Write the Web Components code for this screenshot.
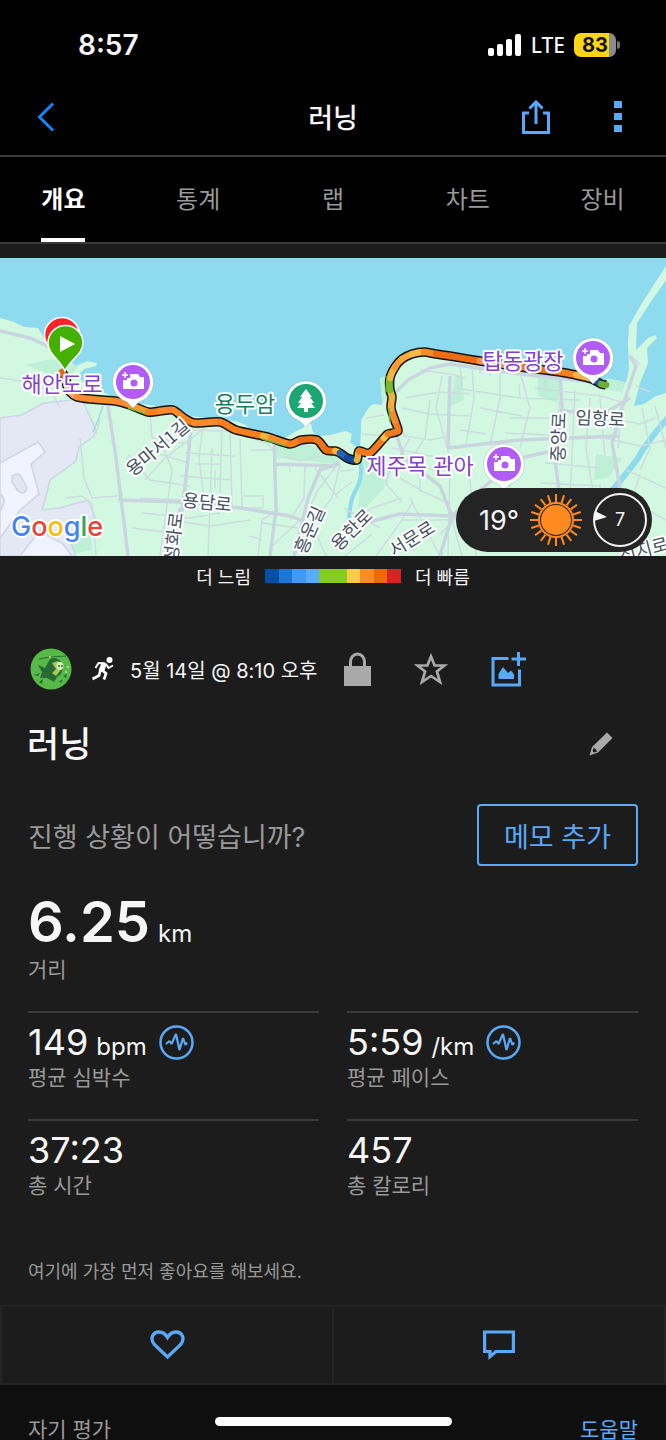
<!DOCTYPE html>
<html lang="ko">
<head>
<meta charset="utf-8">
<meta name="viewport" content="width=device-width, initial-scale=1">
<title>러닝</title>
<style>
    body {
        margin: 0;
        background: #1c1c1c;
        color: #f5f5f5;
        font-family: Inter, "Noto Sans CJK KR", sans-serif;
    }
</style>
</head>
<body>
<activity-page>
    <status-bar slot="top" time="8:57" network="LTE" battery="83"></status-bar>
    <nav-header slot="top">러닝</nav-header>
    <tab-bar slot="top" tabs="개요,통계,랩,차트,장비"></tab-bar>

    <route-map>
        <weather-pill temperature="19°" wind="7"></weather-pill>
    </route-map>
    <pace-legend slow="더 느림" fast="더 빠름"></pace-legend>
    <activity-meta>5월 14일 @ 8:10 오후</activity-meta>
    <activity-title>러닝</activity-title>
    <memo-row action="메모 추가">진행 상황이 어떻습니까?</memo-row>

    <metric-grid>
        <metric-tile main value="6.25" unit="km">거리</metric-tile>
        <metric-tile value="149" unit="bpm" chart>평균 심박수</metric-tile>
        <metric-tile value="5:59" unit="/km" chart>평균 페이스</metric-tile>
        <metric-tile value="37:23">총 시간</metric-tile>
        <metric-tile value="457">총 칼로리</metric-tile>
    </metric-grid>

    <social-bar>여기에 가장 먼저 좋아요를 해보세요.</social-bar>
    <self-evaluation help="도움말">자기 평가</self-evaluation>
</activity-page>

<script>
const icons = {
    back: `<svg width="18" height="30" viewBox="0 0 18 30" fill="none" stroke="#1085f5" stroke-width="3"><path d="M16 1.500L2.500 15L16 28.500"/></svg>`,
    share: `<svg width="28" height="34" viewBox="0 0 28 34" fill="none" stroke="#5aa9f8" stroke-width="3"><path d="M7 13H1.500V32.500H26.500V13H21M14 24V2"/><path d="M7.500 8.500L14 2L20.500 8.500"/></svg>`,
    more: `<svg width="22" height="32" viewBox="-7 0 22 32" fill="#5aa9f8"><path d="M0 0h8v7H0zM0 12h8v7H0zM0 24h8v7H0z"/></svg>`,
    lock: `<svg width="27" height="34" viewBox="0 0 27 34"><path d="M0 14h27v20H0z" fill="#a9a9a9"/><path d="M6.500 15V9.500a7 7.500 0 0 1 14 0V15" fill="none" stroke="#a9a9a9" stroke-width="3"/></svg>`,
    star: `<svg width="34" height="32" viewBox="0 0 34 32" fill="none" stroke="#a9a9a9" stroke-width="2.700"><path d="M17 3.500L20.600 12.500H30.500L22.900 18.500L26 29L17 23L8 29L11.100 18.500L3.500 12.500H13.400Z"/></svg>`,
    photo: `<svg width="35" height="35" viewBox="0 0 35 35"><path d="M17.500 6.500H2V33H28.500V17.500M27.500 0V14M20.500 7H35" fill="none" stroke="#5aa9f8" stroke-width="3"/><path d="M7.500 27V22L12 15L17 21L20 18.500L23 22.500V27Z" fill="#5aa9f8"/></svg>`,
    pencil: `<svg width="24" height="24" viewBox="0 0 24 24"><path d="M18 0.500L23.500 6L9 20.500L0.500 23.500L3 15Z" fill="#a9a9a9"/><path d="M4.800 15.500L8.500 19.300L5 20.500L3.500 19Z" fill="#1c1c1c"/></svg>`,
    runner: `<svg width="22" height="24" viewBox="0 0 22 24"><circle cx="17.500" cy="3" r="3" fill="#fff"/><path d="M13.500 6.500L6.500 6L3.500 11M14 7L16.500 11L21 8.500" fill="none" stroke="#fff" stroke-width="2"/><path d="M12.500 6L9 14.500" stroke="#fff" stroke-width="5.500"/><path d="M10 13L14 16.500L12 22.500M8.500 13L7 18.500L0.500 22" fill="none" stroke="#fff" stroke-width="2.700"/></svg>`,
    wave: `<svg width="35" height="35" viewBox="0 0 35 35" fill="none" stroke="#5aa9f8"><circle cx="17.500" cy="17.500" r="16" stroke-width="2.500"/><path d="M7 19L10.500 16L12.500 19L17 9L20.500 25L24 13L26.500 20L28 17.500" stroke-width="2.200" stroke-linejoin="bevel"/></svg>`,
    heart: `<svg width="35" height="30" viewBox="0 0 35 30" fill="none" stroke="#5aa9f8" stroke-width="3.300"><path d="M17.500 27L4.300 14.500C-0.500 8.500 3 2 9 2C13 2 15.500 4 17.500 7.500C19.500 4 22 2 26 2C32 2 35.500 8.500 30.700 14.500Z"/></svg>`,
    comment: `<svg width="32" height="30" viewBox="0 0 32 30" fill="none" stroke="#5aa9f8" stroke-width="3.200"><path d="M1.600 2H30.400V21.500H13L7 26.500V21.500H1.600Z"/></svg>`
};

// Base class: puts the element's template in an open shadow root
class BaseElement extends HTMLElement {
    connectedCallback () {
        if (this.shadowRoot) return;
        const template = document.createElement ("template");
        template.innerHTML = `
        <style>
            :host { display: block; }
            * { box-sizing: border-box; }
            svg { display: block; flex: none; }
            button {
                margin: 0;
                padding: 0;
                border: 0;
                background: none;
                color: inherit;
                font: inherit;
                cursor: pointer;
            }
        </style>` + this.render ();
        this.attachShadow ({mode: "open"}).appendChild (template.content.cloneNode (true));
    }
}

class ActivityPage extends BaseElement {
    render () {
        return `
        <style>
            header { background: #000; }
            main { padding-top: 14px; }
            .home {
                position: fixed;
                left: 50%;
                bottom: 14px;
                width: 237px;
                height: 9px;
                margin-left: -118px;
                border-radius: 5px;
                background: #fff;
            }
        </style>
        <header><slot name="top"></slot></header>
        <main><slot></slot></main>
        <div class="home"></div>`;
    }
}

class StatusBar extends BaseElement {
    render () {
        return `
        <style>
            :host {
                display: flex;
                align-items: center;
                justify-content: space-between;
                height: 80px;
                padding: 10px 46px 0 78px;
                box-sizing: border-box;
            }
            .time { font-size: 28px; font-weight: 600; }
            .right { display: flex; align-items: center; gap: 9px; }
            .network { font: 500 21px "Noto Sans", sans-serif; }
            .battery { display: flex; align-items: center; gap: 1px; }
            .level {
                width: 42px;
                height: 24px;
                border-radius: 7px;
                background: linear-gradient(90deg, #fcd517 83%, #8b8b8b 83%);
                color: #111;
                font-size: 20px;
                font-weight: 700;
                line-height: 24px;
                text-align: center;
            }
            .tip { width: 3px; height: 8px; border-radius: 0 3px 3px 0; background: #777; }
        </style>
        <span class="time">${this.getAttribute ("time")}</span>
        <div class="right">
            <svg width="34" height="22" viewBox="0 0 34 22" fill="#fff">
                <rect x="0" y="14" width="6" height="8" rx="2"/>
                <rect x="9" y="10" width="6" height="12" rx="2"/>
                <rect x="18" y="5" width="6" height="17" rx="2"/>
                <rect x="27" y="0" width="6" height="22" rx="2"/>
            </svg>
            <span class="network">${this.getAttribute ("network")}</span>
            <div class="battery"><div class="level">${this.getAttribute ("battery")}</div><div class="tip"></div></div>
        </div>`;
    }
}

class NavHeader extends BaseElement {
    render () {
        return `
        <style>
            :host {
                display: grid;
                grid-template-columns: 1fr auto 1fr;
                align-items: center;
                height: 77px;
                padding: 0 37px 2px;
                border-bottom: 2px solid #3a3a3a;
                box-sizing: border-box;
            }
            h1 { margin: 0; font-size: 27px; font-weight: 500; }
            .actions { display: flex; align-items: center; justify-content: flex-end; gap: 57px; }
        </style>
        <button aria-label="뒤로">${icons.back}</button>
        <h1><slot></slot></h1>
        <div class="actions">
            <button aria-label="공유">${icons.share}</button>
            <button aria-label="더 보기">${icons.more}</button>
        </div>`;
    }
}

class TabBar extends BaseElement {
    render () {
        const tabs = this.getAttribute ("tabs").split (",");
        return `
        <style>
            :host { border-bottom: 2px solid #3a3a3a; overflow: hidden; }
            nav { display: grid; grid-template-columns: repeat(5, 1fr); margin: 0 -4px; }
            button {
                justify-self: center;
                height: 85px;
                border-bottom: 4px solid transparent;
                color: #999;
                font-size: 24px;
            }
            button[aria-current] { border-color: #fff; color: #fff; font-weight: 600; }
        </style>
        <nav>${tabs.map ((tab, i) => `<button ${i === 0 ? `aria-current="page"` : ""}>${tab}</button>`).join ("")}</nav>`;
    }
}

const camera = `<path d="M-10 -2h4v-2h3v-4h8l2 3h4v12h-21z" fill="#fff"/><circle cx="1" cy="1" r="3.500" fill="#b15cf7"/><path d="M-8 -10v6M-11 -7h6" stroke="#b15cf7" stroke-width="4"/><path d="M-8 -10v6M-11 -7h6" stroke="#fff" stroke-width="1.500"/>`;
const tree = `<path d="M0 -12L6 -4H4L8 2H5L9 7H2V11H-2V7H-9L-5 2H-8L-4 -4H-6Z" fill="#fff"/>`;

const pin = (x, y, color, glyph) => `
    <g transform="translate(${x} ${y})">
        <path d="M0 26L-6 20A20.500 20.500 0 1 1 6 20Z" fill="#fff" stroke="#8aa" stroke-opacity=".4"/>
        <circle r="17" fill="${color}"/>${glyph}
    </g>`;

const label = (x, y, turn, text, kind = "road") =>
    `<text class="${kind}" transform="translate(${x} ${y}) rotate(${turn})" y="${kind === "road" ? 6 : 8}">${text}</text>`;

// Minor streets, then the wider ones
const streets = `
    M0 120L30 124L52 135L60 150M80 180L84 220L92 240L118 238M66 240L82 238L92 246L96 298M126 200L160 196L188 205
    M100 160L96 176M145 222L165 200L205 170M128 196L150 222L190 228M150 155L152 180L190 186M160 180L172 212L160 298
    M203 168L199 200L204 240M212 190L208 298M222 168L220 235M230 170L232 250M190 172L228 173M185 195L235 198
    M180 218L232 222M196 206H222M215 212V230M140 240L185 242M142 255L190 260L220 255M132 270L165 274M170 262L210 268L250 262
    M240 180L242 250M233 174L268 186L275 194M242 238H263V250H242ZM250 192H274V200M282 198L300 203L320 198M290 205V214
    M278 252L262 262L258 298M262 265L298 270M300 262L270 290M250 278L262 282M305 205L304 240L290 262M315 210L338 240
    M338 206L318 232L304 262M340 206L332 240L312 266L326 298M340 213L354 212M336 236L352 224M344 250L380 270
    M355 262L372 250L402 240M366 160L384 157M362 176L388 178M399 160L404 178L430 182L450 178M402 150L430 156L470 158
    M405 140L440 134L470 136M410 180L398 200L440 214M430 142L425 180L412 200M442 118L436 150L450 200L448 298
    M420 112L450 116L465 120M455 130L520 140L580 142M460 108L462 130M472 110L474 140L466 188M500 112V140L490 188
    M520 114L530 150L520 190M510 160H550M505 175L550 177M480 150L522 158M535 130L600 138L622 144M545 120L546 134
    M575 132L570 240M590 140L586 190L594 240M545 205L600 210M540 225L600 228M560 142L556 170M600 140L605 200
    M604 180L640 188L666 182M610 160L640 166L655 160M620 160L618 190M642 150L650 190L640 212M655 148L666 190
    M626 212L666 230M612 232L666 262M640 216L630 250L645 298M400 220L420 232L450 246M402 262L452 262L500 230
    M410 240L440 298M376 298L402 262L412 245M420 218V234M452 262L462 298M470 220L476 298M430 262L424 280
    M490 236L530 240M505 200L510 230M345 298L372 276M392 206L386 226L402 244M520 140L519 126M480 106V116M490 108V118
    M486 240L458 258L440 276M600 226V240M628 96L640 106M636 128L650 134M460 172L486 176M392 190L440 200`;
const avenues = `
    M0 73L30 80L52 90M108 148L116 200L121 240L128 298M192 160L186 220L176 298M118 242L180 244L240 250L290 258L305 264
    M274 178L276 252L270 298M340 205L320 212L308 240L294 298M276 206L335 208M394 136L408 122L430 110L450 106L520 116L610 126
    M560 114L562 150L554 195L560 240M560 152L600 158L630 140M448 190L520 182L620 178M396 175L404 200L440 228L452 258
    M452 258L480 232L520 200L548 194M630 98L636 108L622 150L612 185L622 240M450 118L448 190M345 270L400 256L452 258
    M452 258L500 262L560 238M452 258L440 298M180 250L172 298`;

// Route points as [x, y, colour of the piece that ends here]
const route = [
    [62, 114], [66, 121, "#e06a1c"], [67, 128, "#f0741c"], [70, 134, "#f8c0a8"], [77, 139, "#f8a878"],
    [90, 141, "#fb8a2c"], [115, 143, "#fb8a2c"], [130, 147, "#fb8a2c"], [148, 154, "#f79a34"],
    [160, 153, "#f77f1e"], [173, 152, "#fb8a2c"], [184, 160, "#fb8a2c"], [195, 165, "#f77f1e"],
    [220, 164, "#fb8a2c"], [236, 172, "#f77f1e"], [263, 178, "#f77f1e"], [271, 180, "#f3b440"],
    [290, 186, "#fb8a2c"], [301, 182, "#f77f1e"], [317, 182, "#e96a10"], [326, 192, "#f07418"],
    [335, 193, "#e96a10"], [340, 195, "#f9b23e"], [347, 200, "#2364b0"], [357, 202, "#12489c"],
    [359, 193, "#e9b03c"], [370, 195, "#f27a1e"], [384, 180, "#f27a1e"], [388, 176, "#fbc247"],
    [398, 173, "#f27a1e"], [395, 163, "#f27a1e"], [391, 150, "#f58c2a"], [392, 139, "#f9a83c"],
    [390, 132, "#e2b83c"], [390, 120, "#78bd28"], [395, 109, "#f9b23e"], [402, 101, "#f79a34"],
    [412, 96, "#f9a83c"], [424, 94, "#fbb845"], [436, 96, "#f58c2a"], [450, 98, "#ec6d13"],
    [480, 103, "#ec6d13"], [520, 109, "#f58c5a"], [560, 114, "#f07418"], [576, 117, "#f77f1e"],
    [592, 121, "#f9b23e"], [601, 126, "#1756a5"], [606, 127, "#6cae32"]
];

// Curve between two neighbours, with the points round them for the tangents
function curve (i) {
    const p0 = route[Math.max (i - 2, 0)];
    const p1 = route[i - 1];
    const p2 = route[i];
    const p3 = route[Math.min (i + 1, route.length - 1)];
    const c1 = [p1[0] + (p2[0] - p0[0]) / 8, p1[1] + (p2[1] - p0[1]) / 8];
    const c2 = [p2[0] - (p3[0] - p1[0]) / 8, p2[1] - (p3[1] - p1[1]) / 8];
    return `C${c1} ${c2} ${p2[0]},${p2[1]}`;
}

function drawRoute () {
    let outline = `M${route[0]}`;
    let pieces = "";
    for (let i = 1; i < route.length; i++) {
        const d = curve (i);
        outline += d;
        pieces += `<path d="M${route[i - 1][0]},${route[i - 1][1]}${d}" stroke="${route[i][2]}"/>`;
    }
    return `
        <path d="${outline}" fill="none" stroke="#151515" stroke-width="9.500" stroke-linejoin="round"/>
        <g fill="none" stroke-width="6.500" stroke-linecap="round">${pieces}</g>`;
}

class RouteMap extends BaseElement {
    render () {
        return `
        <style>
            :host { position: relative; height: 298px; }
            .map { width: 100%; height: 298px; background: #8edaee; }
            text {
                font-family: "Noto Sans CJK KR", sans-serif;
                text-anchor: middle;
                paint-order: stroke;
                stroke: #fff;
                stroke-width: 4px;
                stroke-linejoin: round;
            }
            .road { font-size: 18px; fill: #46515f; }
            .place { font-size: 22px; fill: #8440cf; }
            .park { font-size: 22px; fill: #17805f; }
            .google { font-family: Inter, sans-serif; font-size: 27px; font-weight: 500; text-anchor: start; }
            ::slotted(*) { position: absolute; right: 14px; bottom: 4px; }
        </style>
        <svg class="map" viewBox="0 0 666 298" preserveAspectRatio="xMidYMid slice">
            <path fill="#d3f8e2" d="M0 60L14 64L24 69L38 70L44 80L52 90L64 98L76 108L87 103L97 105L96 108L84 111L78 117L86 128L110 137L135 145L170 150L190 158L235 163L246 167L250 172L285 180L298 172L303 170L306 165L311 166L313 174L318 178L330 177L346 173L352 176L350 184L360 192L361 170Q360 162 364 158Q368 148 374 146L382 147L384 130L387 114L396 100L408 93L425 92L480 103L560 113L603 122L626 124L629 112L628 84L629 68L642 45L666 8V22L652 42L637 65L636 92L648 80L655 77L657 80L647 90L648 105L640 125L634 148L644 146L656 138L666 135V298H0Z"/>
            <path fill="#bdf0d6" d="M24 107L52 101L78 108L68 124L40 112ZM274 178L340 195L339 206L276 200ZM380 120L394 114L390 135L382 146ZM455 118L462 116L464 142L450 148ZM538 120L562 122L558 145L538 138ZM606 120L626 124L622 134L606 132ZM362 200L390 210L384 230L358 258ZM596 196L622 200L608 220L594 222ZM68 285L90 276L93 292L72 296Z"/>
            <path fill="#e4e8f5" stroke="#ccd6e4" stroke-width="1.500" d="M0 160L22 157L44 145L82 141L96 172L94 178L79 189L76 203L50 222L45 242L42 252L60 250L88 242L96 262L84 278L70 284L76 298H0Z"/>
            <path fill="#f1f4ff" stroke="#ced5e6" stroke-width="1.500" d="M0 205L38 184L45 194L31 206L39 236L20 252L0 280Z"/>
            <path fill="#e1e6f3" stroke="#ced5e6" stroke-width="1.500" d="M12 218Q19 213 22 220L27 230Q25 238 18 233L12 224ZM0 236Q7 240 2 250L0 253Z"/>
            <path fill="#f1f4ff" stroke="#ced5e6" stroke-width="1.500" d="M20 298L42 270L48 278L62 285L72 298Z"/>
            <path d="M103 148L98 162L93 174" fill="none" stroke="#9adcea" stroke-width="1.500"/>
            <path d="M359 200Q364 215 357 230Q350 240 349 262" fill="none" stroke="#8edaee" stroke-width="4"/>
            <path d="M668 160Q648 182 638 200Q622 222 600 246L588 262" fill="none" stroke="#8edaee" stroke-width="6"/>
            <path d="${streets}" fill="none" stroke="#ccdde0" stroke-width="1.500"/>
            <path d="${avenues}" fill="none" stroke="#c9d6df" stroke-width="3.500" stroke-linejoin="round"/>
            ${drawRoute ()}
            <path d="M128 150L146 156M262 181L286 188M387 118L386 134M389 150L390 164" fill="none" stroke="#72b936" stroke-width="1.500"/>

            ${label (158, 190, -40, "용마서1길")}
            ${label (207, 245, 6, "용담로")}
            ${label (174, 279, -83, "성화로")}
            ${label (310, 272, -66, "흥운길")}
            ${label (352, 272, -45, "용한로")}
            ${label (412, 281, -32, "서문로")}
            ${label (559, 179, -88, "중앙로")}
            ${label (600, 161, 3, "임항로")}
            ${label (644, 292, -15, "선지로")}
            ${label (62, 126, 0, "해안도로", "place")}
            ${label (245, 146, 0, "용두암", "park")}
            ${label (523, 103, 0, "탑동광장", "place")}
            ${label (420, 208, 0, "제주목 관아", "place")}

            ${pin (133, 124, "#b15cf7", camera)}
            ${pin (306, 143, "#1ba673", tree)}
            ${pin (593, 100, "#b15cf7", camera)}
            ${pin (504, 206, "#b15cf7", camera)}
            <circle cx="62" cy="77" r="17.500" fill="#fb2329" stroke="#fff" stroke-width="1.500"/>
            <path d="M65 113C60 102 48 96 48 85A17.500 17.500 0 0 1 83 85C83 96 70 102 65 113Z" fill="#43b002" stroke="#fff" stroke-width="1.500"/>
            <path d="M60 78V94L75 86Z" fill="#fff"/>

            <text class="google" x="11" y="278"><tspan fill="#4285f4">G</tspan><tspan fill="#ea4335">o</tspan><tspan fill="#fbbc05">o</tspan><tspan fill="#4285f4">g</tspan><tspan fill="#34a853">l</tspan><tspan fill="#ea4335">e</tspan></text>
        </svg>
        <slot></slot>`;
    }
}

class WeatherPill extends BaseElement {
    render () {
        let rays = "";
        for (let i = 0; i < 20; i++) rays += `<path d="M27 1V9" transform="rotate(${i * 18} 27 27)"/>`;
        return `
        <style>
            :host {
                display: flex;
                align-items: center;
                gap: 10px;
                height: 64px;
                padding: 0 5px 0 23px;
                border-radius: 32px;
                background: #242424;
                box-sizing: border-box;
            }
            span { font-size: 27px; }
            .wind { font-size: 18px; fill: #f5f5f5; }
        </style>
        <span>${this.getAttribute ("temperature")}</span>
        <svg width="54" height="54" viewBox="0 0 54 54" fill="none" stroke="#ff8a1f" stroke-width="2">
            ${rays}<circle cx="27" cy="27" r="17"/><circle cx="27" cy="27" r="14" fill="#ff8a1f"/>
        </svg>
        <svg width="54" height="54" viewBox="0 0 54 54">
            <circle cx="27" cy="27" r="26" fill="none" stroke="#f5f5f5" stroke-width="2"/>
            <path d="M2 18L14 24L1 28Z" fill="#f5f5f5"/>
            <text class="wind" x="27" y="33" text-anchor="middle">${this.getAttribute ("wind")}</text>
        </svg>`;
    }
}

class PaceLegend extends BaseElement {
    render () {
        const colors = ["#0450a5", "#1b78d6", "#3f99f5", "#57adff", "#84cc22", "#84cc22", "#fdcb4b", "#fb8c25", "#ee690c", "#d72323"];
        return `
        <style>
            :host {
                display: flex;
                align-items: center;
                justify-content: center;
                gap: 14px;
                height: 40px;
                font-size: 18px;
            }
            .scale { display: grid; grid-template-columns: repeat(10, 1fr); width: 136px; height: 14px; }
        </style>
        <span>${this.getAttribute ("slow")}</span>
        <div class="scale">${colors.map (color => `<i style="background: ${color}"></i>`).join ("")}</div>
        <span>${this.getAttribute ("fast")}</span>`;
    }
}

class ActivityMeta extends BaseElement {
    render () {
        return `
        <style>
            :host {
                display: flex;
                align-items: center;
                height: 42px;
                margin-top: 52px;
                padding: 0 30px;
                font-size: 20px;
            }
            .runner { margin: 0 16px 0 20px; }
            .actions { display: flex; align-items: center; gap: 43px; margin-left: 26px; }
        </style>
        <svg width="42" height="42" viewBox="0 0 42 42">
            <circle cx="21" cy="21" r="20.500" fill="#57b947"/>
            <path d="M8 17L15 20L20 11Q27 8 31 14L33 20L31 26L27 29L24 34L17 30L10 30L12 24Z" fill="#286b36"/>
            <path d="M4 27L10 25L8 28ZM9 34L13 31L12 36ZM33 28L37 26L36 30ZM29 33L33 32L31 35Z" fill="#286b36"/>
            <path d="M9 11L20 9L36 8" fill="none" stroke="#286b36"/>
            <path d="M22 15L28 13L32 17L30 23L26 28L22 25L26 21Z" fill="#a4cc54"/>
            <ellipse cx="30" cy="18" rx="3.500" ry="4" fill="#d9edb8"/>
            <circle cx="29" cy="18" r="1" fill="#286b36"/><circle cx="32" cy="18" r="1" fill="#286b36"/>
            <circle cx="38" cy="19" r="1" fill="#c3e6a0"/><circle cx="36" cy="24" r="1" fill="#c3e6a0"/><circle cx="20" cy="9" r="1" fill="#d9d860"/>
        </svg>
        <div class="runner">${icons.runner}</div>
        <time><slot></slot></time>
        <div class="actions">
            <button aria-label="비공개">${icons.lock}</button>
            <button aria-label="즐겨찾기">${icons.star}</button>
            <button aria-label="사진 추가">${icons.photo}</button>
        </div>`;
    }
}

class ActivityTitle extends BaseElement {
    render () {
        return `
        <style>
            :host {
                display: flex;
                align-items: center;
                justify-content: space-between;
                margin-top: 28px;
                padding: 0 53px 0 27px;
            }
            h2 { margin: 0; font-size: 35px; font-weight: 500; line-height: 52px; }
        </style>
        <h2><slot></slot></h2>
        <button aria-label="이름 수정">${icons.pencil}</button>`;
    }
}

class MemoRow extends BaseElement {
    render () {
        return `
        <style>
            :host {
                display: flex;
                align-items: center;
                justify-content: space-between;
                margin-top: 34px;
                padding: 0 28px;
                color: #999;
                font-size: 27px;
            }
            button {
                height: 62px;
                padding: 0 25px;
                border: 2px solid #5aa9f8;
                border-radius: 4px;
                color: #5aa9f8;
            }
        </style>
        <span><slot></slot></span>
        <button>${this.getAttribute ("action")}</button>`;
    }
}

class MetricGrid extends BaseElement {
    render () {
        return `
        <style>
            :host {
                display: grid;
                grid-template-columns: 1fr 1fr;
                column-gap: 28px;
                margin-top: 26px;
                padding: 0 28px;
            }
        </style>
        <slot></slot>`;
    }
}

class MetricTile extends BaseElement {
    render () {
        const unit = this.getAttribute ("unit");
        return `
        <style>
            :host { height: 108px; border-top: 2px solid #3a3a3a; padding-top: 8px; box-sizing: border-box; }
            :host([main]) { grid-column: 1 / -1; height: 119px; border: 0; padding: 0; }
            .line { display: flex; align-items: center; gap: 12px; height: 42px; }
            .amount { display: flex; align-items: baseline; gap: 8px; }
            .value { font-size: 36px; }
            .unit { font-size: 24px; }
            .label { color: #999; font-size: 21px; line-height: 30px; }
            :host([main]) .line { height: 60px; }
            :host([main]) .value { font-size: 56px; font-weight: 600; }
            :host([main]) .label { padding-top: 3px; }
        </style>
        <div class="line">
            <div class="amount"><span class="value">${this.getAttribute ("value")}</span>${unit ? `<span class="unit">${unit}</span>` : ""}</div>
            ${this.hasAttribute ("chart") ? `<button aria-label="차트 보기">${icons.wave}</button>` : ""}
        </div>
        <div class="label"><slot></slot></div>`;
    }
}

class SocialBar extends BaseElement {
    render () {
        return `
        <style>
            :host { margin-top: 31px; }
            p { margin: 0; padding: 0 28px; color: #999; font-size: 18px; line-height: 28px; }
            .buttons {
                display: grid;
                grid-template-columns: 1fr 1fr;
                gap: 2px;
                margin-top: 19px;
                padding: 2px;
                background: #242424;
            }
            button { display: flex; align-items: center; justify-content: center; height: 76px; background: #1c1c1c; }
        </style>
        <p><slot></slot></p>
        <div class="buttons">
            <button aria-label="좋아요">${icons.heart}</button>
            <button aria-label="댓글">${icons.comment}</button>
        </div>`;
    }
}

class SelfEvaluation extends BaseElement {
    render () {
        return `
        <style>
            :host {
                display: flex;
                justify-content: space-between;
                padding: 35px 28px 0;
                background: #0f0f0f;
                color: #999;
                font-size: 21px;
                line-height: 20px;
            }
            a { color: #5aa9f8; text-decoration: none; }
        </style>
        <span><slot></slot></span>
        <a href="#help">${this.getAttribute ("help")}</a>`;
    }
}

customElements.define ("activity-page", ActivityPage);
customElements.define ("status-bar", StatusBar);
customElements.define ("nav-header", NavHeader);
customElements.define ("tab-bar", TabBar);
customElements.define ("route-map", RouteMap);
customElements.define ("weather-pill", WeatherPill);
customElements.define ("pace-legend", PaceLegend);
customElements.define ("activity-meta", ActivityMeta);
customElements.define ("activity-title", ActivityTitle);
customElements.define ("memo-row", MemoRow);
customElements.define ("metric-grid", MetricGrid);
customElements.define ("metric-tile", MetricTile);
customElements.define ("social-bar", SocialBar);
customElements.define ("self-evaluation", SelfEvaluation);
</script>
</body>
</html>
